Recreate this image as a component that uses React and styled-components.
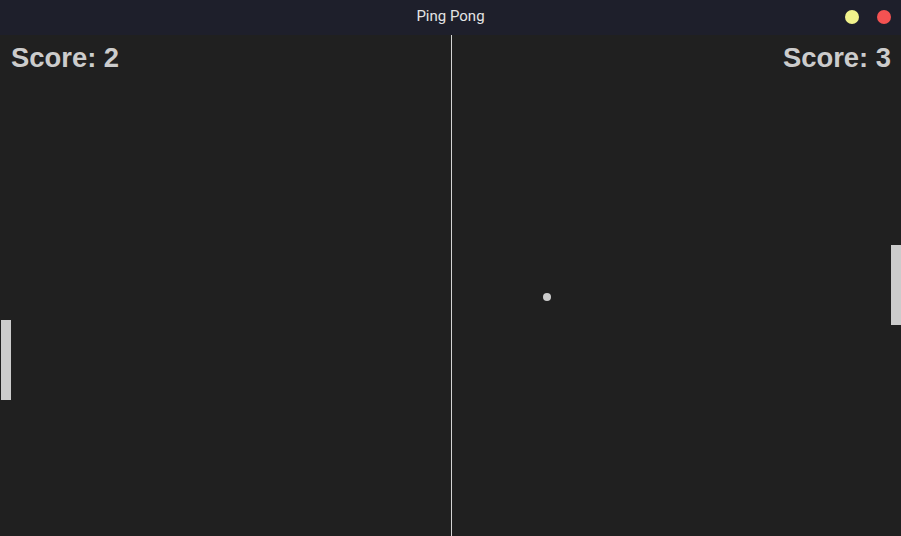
import React from 'react'
import styled, { createGlobalStyle } from 'styled-components'

const Global = createGlobalStyle`
  html, body {
    margin: 0;
    padding: 0;
    background: #202020;
  }
  #root {
    height: 100vh;
  }
`

const game = {
  scores: [2, 3],
  paddles: [
    { side: 'left', top: 285 },
    { side: 'right', top: 210 },
  ],
  ball: { x: 547, y: 262 },
}

const App = () => {
  return (
    <Window>
      <Global />
      <TitleBar>
        <Title>Ping Pong</Title>
        <Controls>
          <Dot color="#f1f28c" />
          <Dot color="#f45252" />
        </Controls>
      </TitleBar>
      <Field>
        <Half>
          <Score>Score: {game.scores[0]}</Score>
        </Half>
        <Net />
        <Half align="right">
          <Score>Score: {game.scores[1]}</Score>
        </Half>
        {game.paddles.map(p => (
          <Paddle key={p.side} side={p.side} style={{ top: p.top }} />
        ))}
        <Ball style={{ left: game.ball.x - 4, top: game.ball.y - 4 }} />
      </Field>
    </Window>
  )
}

export default App

const Window = styled.div`
  display: flex;
  flex-direction: column;
  width: 901px;
  height: 536px;
  overflow: hidden;
  background: #202020;
`

const TitleBar = styled.div`
  position: relative;
  height: 35px;
  flex-shrink: 0;
  display: flex;
  align-items: center;
  justify-content: center;
  background: #1e1f2b;
`

const Title = styled.span`
  font-family: Roboto, 'Liberation Sans', sans-serif;
  font-size: 15px;
  color: #e4e4e4;
  margin-top: -4px;
`

const Controls = styled.div`
  position: absolute;
  right: 10px;
  top: 10px;
  display: flex;
  gap: 18px;
`

const Dot = styled.span`
  width: 14px;
  height: 14px;
  border-radius: 50%;
  background: ${p => p.color};
`

const Field = styled.div`
  position: relative;
  flex: 1;
  display: grid;
  grid-template-columns: 451px 1px 1fr;
  background: #202020;
`

const Half = styled.div`
  display: flex;
  align-items: flex-start;
  justify-content: ${p => (p.align === 'right' ? 'flex-end' : 'flex-start')};
  padding: 9px 11px 0 11px;
  ${p => p.align === 'right' && 'padding-right: 10px;'}
`

const Net = styled.div`
  background: #d4d4d4;
`

const Score = styled.div`
  font-family: 'Liberation Sans', Arial, sans-serif;
  font-weight: bold;
  font-size: 27.4px;
  line-height: 28px;
  color: #cccccc;
`

const Paddle = styled.div`
  position: absolute;
  ${p => (p.side === 'left' ? 'left: 1px;' : 'right: 0;')}
  width: 10px;
  height: 80px;
  background: #cccccc;
`

const Ball = styled.div`
  position: absolute;
  width: 8px;
  height: 8px;
  border-radius: 50%;
  background: #cccccc;
`
